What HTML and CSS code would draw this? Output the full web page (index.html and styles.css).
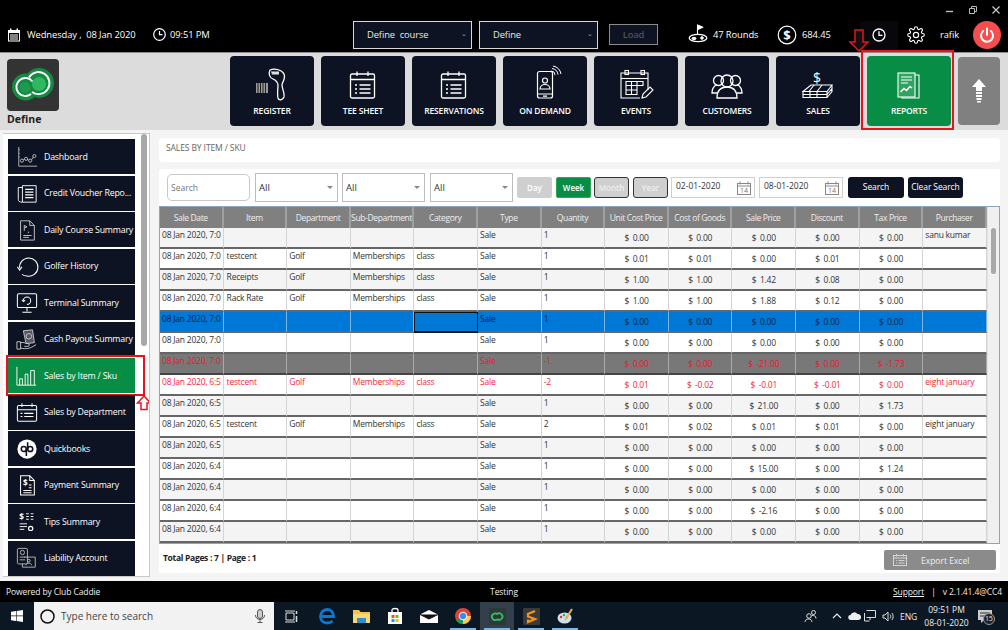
FILE: index.html
```html
<!DOCTYPE html>
<html lang="en">
<head>
<meta charset="utf-8">
<title>Sales by Item / SKU</title>
<link rel="stylesheet" href="styles.css">
</head>
<body>
<div class="app">
<header class="topbar">
  <div class="winctl">
    <svg width="10" height="10" viewBox="0 0 10 10"><path d="M1 6.5h7" stroke="#bbb" stroke-width="1.4"/></svg>
    <svg width="10" height="10" viewBox="0 0 10 10" fill="none" stroke="#bbb"><path d="M1.5 3.5h5v5h-5zM3.5 3.5v-2h5v5h-2"/></svg>
    <svg width="10" height="10" viewBox="0 0 10 10" fill="none" stroke="#ccc" stroke-width="1.2"><path d="M1.5 1.5l7 7M8.500 1.5l-7 7"/></svg>
  </div>
  <div class="toprow">
    <svg class="i-cal" width="14" height="14" viewBox="0 0 14 14"><path fill="#fff" d="M1 2h2V.5h1.500V2h5V.5H11V2h2v11.500H1zM2 5v7.500h10V5z"/><path fill="#fff" d="M3 6.500h8v1H3zM3 8.500h8v1H3zM3 10.500h8v1H3z"/></svg>
    <span class="t-date">Wednesday ,&nbsp; 08 Jan 2020</span>
    <svg class="i-clock" width="13" height="13" viewBox="0 0 13 13" fill="none" stroke="#fff" stroke-width="1.200"><circle cx="6.500" cy="6.500" r="5.800"/><path d="M6.500 3v3.700h3"/></svg>
    <span class="t-time">09:51 PM</span>
    <div class="dd dd-1">Define&nbsp; course<span class="caret">&#8964;</span></div>
    <div class="dd dd-2">Define<span class="caret">&#8964;</span></div>
    <div class="load">Load</div>
    <svg class="i-golf" width="20" height="20" viewBox="0 0 20 20" fill="none" stroke="#fff"><path d="M9.500 11V1l5 2.200-5 2.300" stroke-width="1.100"/><path d="M9.500 1l5 2.200-5 2.300z" fill="#fff"/><ellipse cx="10" cy="14" rx="8.800" ry="3.600" stroke-width="1.300"/><ellipse cx="6" cy="14.500" rx="2" ry="1.200" fill="#fff"/><circle cx="14" cy="14" r="1.300" fill="#fff"/></svg>
    <span class="t-rounds">47 Rounds</span>
    <svg class="i-dollar" width="20" height="20" viewBox="0 0 20 20" fill="none" stroke="#fff" stroke-width="1.200"><circle cx="10" cy="10" r="8.800"/><text x="10" y="14.500" text-anchor="middle" class="dollar-glyph">$</text></svg>
    <span class="t-bal">684.45</span>
    <div class="clockbox"><svg width="14" height="14" viewBox="0 0 14 14" fill="none" stroke="#fff" stroke-width="1.300"><circle cx="7" cy="7" r="6"/><path d="M7 3.200V7.400h3.500"/></svg></div>
    <svg class="i-gear" width="18" height="18" viewBox="0 0 24 24" fill="none" stroke="#fff" stroke-width="1.500"><circle cx="12" cy="12" r="3.500"/><path d="M19.400 15a1.700 1.700 0 0 0 .3 1.800l.1.100a2 2 0 1 1-2.800 2.800l-.1-.1a1.700 1.700 0 0 0-2.900 1.200V21a2 2 0 1 1-4 0v-.1a1.700 1.700 0 0 0-2.900-1.200l-.1.100a2 2 0 1 1-2.800-2.800l.1-.1a1.700 1.700 0 0 0-1.200-2.900H3a2 2 0 1 1 0-4h.1a1.700 1.700 0 0 0 1.200-2.900l-.1-.1a2 2 0 1 1 2.800-2.800l.1.100a1.700 1.700 0 0 0 2.900-1.200V3a2 2 0 1 1 4 0v.1a1.700 1.700 0 0 0 2.900 1.200l.1-.1a2 2 0 1 1 2.800 2.800l-.1.100a1.700 1.700 0 0 0 1.200 2.900h.1a2 2 0 1 1 0 4h-.1a1.700 1.700 0 0 0-1.500 1z"/></svg>
    <span class="t-user">rafik</span>
    <div class="power"><svg width="16" height="16" viewBox="0 0 16 16" fill="none" stroke="#fff" stroke-width="2" stroke-linecap="round"><path d="M8 1.500v6.500"/><path d="M4.200 4a6 6 0 1 0 7.600 0"/></svg></div>
  </div>
</header>

<nav class="navband">
  <div class="brand">
    <div class="logo">
      <svg width="52" height="52" viewBox="0 0 52 52"><circle cx="18.500" cy="28" r="13.500" fill="#148a43"/><circle cx="32" cy="24" r="15" fill="#148a43"/><circle cx="32" cy="25" r="7" fill="#2cb960"/><circle cx="18" cy="28.500" r="5.500" fill="#1d9a4f"/><path d="M25.500 22.500A9 9 0 1 0 24 35M22 18.500A11 11 0 1 1 25 33" fill="none" stroke="#fff" stroke-width="1.900"/></svg>
    </div>
    <div class="brandname">Define</div>
  </div>
  <div class="tiles">
    <a class="tile">
      <svg width="36" height="34" viewBox="0 0 36 34" fill="none" stroke="#fff"><path d="M2 15h12v10H2z" fill="#999" stroke="none"/><path d="M4 15v10M6.500 15v10M9 15v10M11.500 15v10" stroke="#222"/><path d="M16 2c5-2 12 0 14 4 2 5-2 8-2 11 0 4 3 8 2 12-1 3-5 4-6 1-1-4 0-9 0-13 0-2-2-5-5-6-3-1-5-5-3-9z" stroke-width="1.300"/><path d="M17 3.500h8v3h-7z" fill="#ddd" stroke="none"/></svg>
      <span>REGISTER</span>
    </a>
    <a class="tile">
      <svg width="36" height="34" viewBox="0 0 36 34" fill="none" stroke="#fff" stroke-width="1.300"><rect x="5.500" y="6" width="24" height="24" rx="1.500"/><path d="M5.500 11.500h24M12 3.500V8M23 3.500V8"/><path d="M10 17h2M14.500 17h11M10 21h2M14.500 21h11M10 25h2M14.500 25h11"/></svg>
      <span>TEE SHEET</span>
    </a>
    <a class="tile">
      <svg width="36" height="34" viewBox="0 0 36 34" fill="none" stroke="#fff" stroke-width="1.300"><rect x="5.500" y="6" width="24" height="24" rx="1.500"/><path d="M5.500 11.500h24M12 3.500V8M23 3.500V8"/><path d="M10 17h2M14.500 17h11M10 21h2M14.500 21h11M10 25h2M14.500 25h11"/></svg>
      <span>RESERVATIONS</span>
    </a>
    <a class="tile">
      <svg width="36" height="34" viewBox="0 0 36 34" fill="none" stroke="#fff" stroke-width="1.200"><rect x="10.500" y="3.500" width="15" height="26.500" rx="2"/><path d="M10.500 26h15M16 28.200h4"/><circle cx="18" cy="12.500" r="2.500"/><path d="M13 21c0-6 10-6 10 0z"/><path d="M24 3a4 4 0 0 1 4 4M25 .5a7 7 0 0 1 6 6M26 -2a10 10 0 0 1 8 8" stroke-width="1"/></svg>
      <span>ON DEMAND</span>
    </a>
    <a class="tile">
      <svg width="36" height="34" viewBox="0 0 36 34" fill="none" stroke="#fff" stroke-width="1.100"><path d="M22 30H3V5h27v17"/><path d="M3 10.500h27"/><rect x="7" y="2.500" width="3.500" height="4"/><rect x="23" y="2.500" width="3.500" height="4"/><path d="M8 13.500h17v4H8zM8 17.500h11v9H8zM13.500 13.500v13M19 13.500v4M8 22h11"/><path d="M24 30l1-4 7-7 3 3-7 7z"/></svg>
      <span>EVENTS</span>
    </a>
    <a class="tile">
      <svg width="36" height="34" viewBox="0 0 36 34" fill="none" stroke="#fff" stroke-width="1.300"><circle cx="18" cy="13" r="6"/><circle cx="9.500" cy="12.500" r="5"/><circle cx="26.500" cy="12.500" r="5"/><path d="M8 30c0-8 4-11 10-11s10 3 10 11z"/><path d="M8 25H3c0-5 2-7 5-8.500M28 25h5c0-5-2-7-5-8.500"/></svg>
      <span>CUSTOMERS</span>
    </a>
    <a class="tile">
      <svg width="36" height="34" viewBox="0 0 36 34" fill="none" stroke="#fff" stroke-width="1.100"><text x="17" y="15" text-anchor="middle" class="sales-glyph">$</text><path d="M11 17h21l-5 6.500H3z"/><path d="M3 23.500v3h24v-3M3 26.500v3h24v-3M27 26.500l5-6v-3M27 29.500l5-6v-3"/><path d="M14 17l-5 6.500M22 17l-5 6.500M10 23.500v6M17 23.500v6"/></svg>
      <span>SALES</span>
    </a>
    <a class="tile tile-on">
      <svg width="36" height="34" viewBox="0 0 36 34" fill="none" stroke="#fff" stroke-width="1.100"><path d="M24 7h4v23H11v-1"/><rect x="7" y="5" width="17" height="24" fill="#2da45f"/><path d="M10 9h11M10 12h11M10 15h7"/><path d="M9.500 24l3.500-3.500 2.500 2 3.500-4 2 1.500" stroke-width="1.500"/></svg>
      <span>REPORTS</span>
      <i class="redbox redbox-tile"></i>
      <svg class="arrow-down" width="22" height="24" viewBox="0 0 22 24"><path d="M7 1h8v12h5L11 22 2 13h5z" fill="#111" stroke="#e8131f" stroke-width="1.500"/></svg>
    </a>
    <a class="tile-up">
      <svg width="14" height="24" viewBox="0 0 14 24"><path fill="#fff" d="M7 0l7 8h-4v4H4V8H0z"/><path fill="#fff" d="M4 13h6v2H4zM4 16h6v2H4zM4.500 19h5v2h-5zM5 22h4v1.500H5z"/></svg>
    </a>
  </div>
</nav>

<main class="main">
  <aside class="side">
    <div class="sidelist">
      <a class="sitem"><svg width="24" height="24" viewBox="0 0 24 24" fill="none" stroke="#ccc" stroke-width=".9"><path d="M3 1v21h20" /><path d="M3 4h2M3 8h2M3 12h2" stroke-dasharray="1 1"/><circle cx="6.500" cy="16" r="1.700"/><circle cx="11" cy="14" r="1.700"/><circle cx="15.500" cy="16" r="1.700"/><circle cx="20" cy="11" r="1.700"/><path d="M8 15l1.500-.5M12.500 15l1.500.5M17 15l2-3"/></svg><span>Dashboard</span></a>
      <a class="sitem"><svg width="24" height="24" viewBox="0 0 24 24" fill="none" stroke="#fff" stroke-width="1"><path d="M7 4h15v18H7z"/><path d="M7 6H2.500v13c0 2 1 3 4.500 3"/><path d="M10 8h9M10 11h9M10 14h9M10 17h9" stroke-width="1.300"/></svg><span>Credit Voucher Repo...</span></a>
      <a class="sitem"><svg width="24" height="24" viewBox="0 0 24 24" fill="none" stroke="#ccc" stroke-width="1"><path d="M5 2h10l5 5v16H5z"/><path d="M15 2v5h5"/><path d="M9 7v6M9 7l3 1.500L9 10M13 14l1 .5-1 .5M8 18h9M8 20h6"/></svg><span>Daily Course Summary</span></a>
      <a class="sitem"><svg width="24" height="24" viewBox="0 0 24 24" fill="none" stroke="#fff" stroke-width="1.100"><path d="M4 14.500A10 10 0 1 1 12 23c-2.500 0-4-.6-5.500-2"/><path d="M1.500 13l2.500 3.500L6.500 13"/></svg><span>Golfer History</span></a>
      <a class="sitem"><svg width="24" height="24" viewBox="0 0 24 24" fill="none" stroke="#fff" stroke-width="1.100"><rect x="1.500" y="2" width="21" height="15" rx="1.500"/><path d="M12 17v4M7 22h10M8 9.500A4 4 0 1 1 12 13.500"/><path d="M6.500 8.500L8 10.500 10 9"/></svg><span>Terminal Summary</span></a>
      <a class="sitem"><svg width="24" height="24" viewBox="0 0 24 24" fill="none" stroke="#ccc" stroke-width="1"><path d="M8 3l10-1 2 14-9 1z" fill="#556"/><circle cx="14" cy="9" r="3"/><path d="M1 15h4v8H1zM5 16c4-1 5 1 8 1 2 0 2 3 0 3H9M5 22c6 1 10 1 17-4"/></svg><span>Cash Payout Summary</span></a>
      <a class="sitem sitem-on"><svg width="24" height="24" viewBox="0 0 24 24" fill="none" stroke="#fff" stroke-width="1"><path d="M1 2v20h21"/><path d="M4 22v-7h3v7M10 22V10h3v12M16 22V6h4v16"/></svg><span>Sales by Item / Sku</span><i class="redbox redbox-side"></i><svg class="arrow-up" width="16" height="16" viewBox="0 0 16 16"><path d="M8 1l6.500 7H11v6.500H5V8H1.500z" fill="#fff" stroke="#e8131f" stroke-width="1.500"/></svg></a>
      <a class="sitem"><svg width="24" height="24" viewBox="0 0 24 24" fill="none" stroke="#fff" stroke-width="1.100"><rect x="1.500" y="5" width="21" height="17" rx="1.500"/><path d="M1.500 9.500h21M6.500 2.500V6.500M17.500 2.500V6.500"/><path d="M5 13.500h2M9 13.500h10M5 17h2M9 17h10"/></svg><span>Sales by Department</span></a>
      <a class="sitem"><svg width="24" height="24" viewBox="0 0 24 24"><circle cx="12" cy="12" r="10.500" fill="#fff"/><g fill="none" stroke="#0d1322" stroke-width="1.700"><circle cx="8.500" cy="12" r="2.800"/><circle cx="15.500" cy="12" r="2.800"/><path d="M11.300 12v7.500M12.700 4.500V12"/></g></svg><span>Quickbooks</span></a>
      <a class="sitem"><svg width="24" height="24" viewBox="0 0 24 24" fill="none" stroke="#fff" stroke-width="1.100"><path d="M5 2h10l5 5v16H5z"/><path d="M15 2v5h5"/><text x="10" y="13" text-anchor="middle" class="doc-glyph">$</text><path d="M14 12h3M14 15h3M8 18h9M8 20.500h9"/></svg><span>Payment Summary</span></a>
      <a class="sitem"><svg width="24" height="24" viewBox="0 0 24 24" fill="none" stroke="#fff" stroke-width="1"><text x="6" y="10" text-anchor="middle" class="tip-glyph">$</text><path d="M11 3h3M16 3h3M11 6h3M16 6h3M11 9h3M16 9h3M4 14h8M4 17h8M4 20h5"/><circle cx="16" cy="19" r="2.300" stroke-width="1.300"/></svg><span>Tips Summary</span></a>
      <a class="sitem"><svg width="24" height="24" viewBox="0 0 24 24" fill="none" stroke="#bbb" stroke-width="1"><rect x="1.500" y="1.500" width="11" height="17" rx="1.500"/><circle cx="7" cy="6" r="2.300"/><path d="M4 11h6M4 14h6"/><path d="M9 11h12v11H7v-4"/><circle cx="14" cy="15" r="1.500"/><path d="M11 20c0-3 6-3 6 0"/></svg><span>Liability Account</span></a>
      <a class="sitem"></a>
    </div>
    <div class="sidebar-thumb"></div>
  </aside>

  <section class="content">
    <div class="crumb">SALES BY ITEM / SKU</div>
    <div class="panel">
      <div class="filters">
        <div class="f-search">Search</div>
        <div class="f-sel">All<b class="tri"></b></div>
        <div class="f-sel">All<b class="tri"></b></div>
        <div class="f-sel">All<b class="tri"></b></div>
        <div class="pill pill-off">Day</div>
        <div class="pill pill-on">Week</div>
        <div class="pill pill-ring">Month</div>
        <div class="pill pill-ring pill-last">Year</div>
        <div class="f-date">02-01-2020<svg width="14" height="14" viewBox="0 0 14 14" fill="none" stroke="#888"><rect x=".5" y="2.500" width="13" height="11"/><path d="M.5 5h13M3 .5v3M11 .5v3"/><text x="7" y="12.300" text-anchor="middle" class="cal-glyph">14</text></svg></div>
        <div class="f-date">08-01-2020<svg width="14" height="14" viewBox="0 0 14 14" fill="none" stroke="#888"><rect x=".5" y="2.500" width="13" height="11"/><path d="M.5 5h13M3 .5v3M11 .5v3"/><text x="7" y="12.300" text-anchor="middle" class="cal-glyph">14</text></svg></div>
        <div class="btn-dark btn-search">Search</div>
        <div class="btn-dark btn-clear">Clear Search</div>
      </div>

      <div class="gridwrap">
        <table class="grid">
          <thead>
            <tr><th>Sale Date</th><th>Item</th><th>Department</th><th>Sub-Department</th><th>Category</th><th>Type</th><th>Quantity</th><th>Unit Cost Price</th><th>Cost of Goods</th><th>Sale Price</th><th>Discount</th><th>Tax Price</th><th>Purchaser</th></tr>
          </thead>
          <tbody>
            <tr class="alt"><td>08 Jan 2020, 7:0</td><td></td><td></td><td></td><td></td><td>Sale</td><td>1</td><td class="m">$ 0.00</td><td class="m">$ 0.00</td><td class="m">$ 0.00</td><td class="m">$ 0.00</td><td class="m">$ 0.00</td><td>sanu kumar</td></tr>
            <tr><td>08 Jan 2020, 7:0</td><td>testcent</td><td>Golf</td><td>Memberships</td><td>class</td><td>Sale</td><td>1</td><td class="m">$ 0.01</td><td class="m">$ 0.01</td><td class="m">$ 0.00</td><td class="m">$ 0.01</td><td class="m">$ 0.00</td><td></td></tr>
            <tr class="alt"><td>08 Jan 2020, 7:0</td><td>Receipts</td><td>Golf</td><td>Memberships</td><td>class</td><td>Sale</td><td>1</td><td class="m">$ 1.00</td><td class="m">$ 1.00</td><td class="m">$ 1.42</td><td class="m">$ 0.08</td><td class="m">$ 0.00</td><td></td></tr>
            <tr><td>08 Jan 2020, 7:0</td><td>Rack Rate</td><td>Golf</td><td>Memberships</td><td>class</td><td>Sale</td><td>1</td><td class="m">$ 1.00</td><td class="m">$ 1.00</td><td class="m">$ 1.88</td><td class="m">$ 0.12</td><td class="m">$ 0.00</td><td></td></tr>
            <tr class="sel"><td>08 Jan 2020, 7:0</td><td></td><td></td><td></td><td class="focus"></td><td>Sale</td><td>1</td><td class="m">$ 0.00</td><td class="m">$ 0.00</td><td class="m">$ 0.00</td><td class="m">$ 0.00</td><td class="m">$ 0.00</td><td></td></tr>
            <tr><td>08 Jan 2020, 7:0</td><td></td><td></td><td></td><td></td><td>Sale</td><td>1</td><td class="m">$ 0.00</td><td class="m">$ 0.00</td><td class="m">$ 0.00</td><td class="m">$ 0.00</td><td class="m">$ 0.00</td><td></td></tr>
            <tr class="void"><td>08 Jan 2020, 7:0</td><td></td><td></td><td></td><td></td><td>Sale</td><td>-1</td><td class="m">$ 0.00</td><td class="m">$ 0.00</td><td class="m">$ -21.00</td><td class="m">$ 0.00</td><td class="m">$ -1.73</td><td></td></tr>
            <tr class="neg"><td>08 Jan 2020, 6:5</td><td>testcent</td><td>Golf</td><td>Memberships</td><td>class</td><td>Sale</td><td>-2</td><td class="m">$ 0.01</td><td class="m">$ -0.02</td><td class="m">$ -0.01</td><td class="m">$ -0.01</td><td class="m">$ 0.00</td><td>eight january</td></tr>
            <tr class="alt"><td>08 Jan 2020, 6:5</td><td></td><td></td><td></td><td></td><td>Sale</td><td>1</td><td class="m">$ 0.00</td><td class="m">$ 0.00</td><td class="m">$ 21.00</td><td class="m">$ 0.00</td><td class="m">$ 1.73</td><td></td></tr>
            <tr><td>08 Jan 2020, 6:5</td><td>testcent</td><td>Golf</td><td>Memberships</td><td>class</td><td>Sale</td><td>2</td><td class="m">$ 0.01</td><td class="m">$ 0.02</td><td class="m">$ 0.01</td><td class="m">$ 0.01</td><td class="m">$ 0.00</td><td>eight january</td></tr>
            <tr class="alt"><td>08 Jan 2020, 6:5</td><td></td><td></td><td></td><td></td><td>Sale</td><td>1</td><td class="m">$ 0.00</td><td class="m">$ 0.00</td><td class="m">$ 0.00</td><td class="m">$ 0.00</td><td class="m">$ 0.00</td><td></td></tr>
            <tr><td>08 Jan 2020, 6:4</td><td></td><td></td><td></td><td></td><td>Sale</td><td>1</td><td class="m">$ 0.00</td><td class="m">$ 0.00</td><td class="m">$ 15.00</td><td class="m">$ 0.00</td><td class="m">$ 1.24</td><td></td></tr>
            <tr class="alt"><td>08 Jan 2020, 6:4</td><td></td><td></td><td></td><td></td><td>Sale</td><td>1</td><td class="m">$ 0.00</td><td class="m">$ 0.00</td><td class="m">$ 0.00</td><td class="m">$ 0.00</td><td class="m">$ 0.00</td><td></td></tr>
            <tr><td>08 Jan 2020, 6:4</td><td></td><td></td><td></td><td></td><td>Sale</td><td>1</td><td class="m">$ 0.00</td><td class="m">$ 0.00</td><td class="m">$ -2.16</td><td class="m">$ 0.00</td><td class="m">$ 0.00</td><td></td></tr>
            <tr class="alt"><td>08 Jan 2020, 6:4</td><td></td><td></td><td></td><td></td><td>Sale</td><td>1</td><td class="m">$ 0.00</td><td class="m">$ 0.00</td><td class="m">$ 0.00</td><td class="m">$ 0.00</td><td class="m">$ 0.00</td><td></td></tr>
          </tbody>
        </table>
        <div class="gridscroll"><div class="gridthumb"></div></div>
      </div>

      <div class="panelfoot">
        <div class="totals">Total Pages : 7 | Page : 1</div>
        <div class="export"><svg width="14" height="12" viewBox="0 0 14 12" fill="none" stroke="#ddd" stroke-width=".9"><rect x=".5" y="1.500" width="13" height="10"/><path d="M.5 4h13M3.500 0v2.500M10.500 0v2.500M3 6.500h1M5.500 6.500h6M3 9h1M5.500 9h6"/></svg><span>Export Excel</span></div>
      </div>
    </div>
  </section>
</main>

<footer class="foot">
  <span class="foot-l">Powered by Club Caddie</span>
  <span class="foot-c">Testing</span>
  <span class="foot-r"><u>Support</u><em>|</em>v 2.1.41.4@CC4</span>
</footer>

<div class="taskbar">
  <div class="startbtn"><svg width="12" height="12" viewBox="0 0 12 12" fill="#fff"><path d="M0 1.700L5 1v4.600H0zM5.600 .9L12 0v5.600H5.600zM0 6.200h5v4.700l-5-.7zM5.600 6.200H12V12l-6.400-.9z"/></svg></div>
  <div class="tsearch">
    <svg width="15" height="15" viewBox="0 0 15 15" fill="none" stroke="#111" stroke-width="1.500"><circle cx="7.500" cy="7.500" r="6.500"/></svg>
    <span>Type here to search</span>
    <svg class="mic" width="10" height="14" viewBox="0 0 10 14" fill="none" stroke="#555"><rect x="2.500" y=".5" width="5" height="9" rx="2.500" fill="#ccc"/><path d="M.5 6c0 6 9 6 9 0M5 11v2.500M2.500 13.500h5"/></svg>
  </div>
  <div class="tview"><svg width="13" height="13" viewBox="0 0 13 13" fill="none" stroke="#ddd"><path d="M1 3h8v7H1zM0 1h10M0 12h10" /><path d="M11.500 1v3M11.500 6v6" stroke-width="1.500"/></svg></div>
  <div class="tapps">
    <div class="tapp"><svg width="16" height="16" viewBox="0 0 16 16" fill="none" stroke="#0b78d6" stroke-width="2.800"><path d="M3 8.500h11.500C14.500 4 11.500 1.500 8 1.500 4 1.500 1.500 5 1.500 8.500c0 4 3 6.500 6.500 6.500 2.500 0 4.500-1 5.500-2"/></svg></div>
    <div class="tapp"><svg width="17" height="14" viewBox="0 0 17 14"><path d="M0 1h6l1.500 2H17v11H0z" fill="#f2c14e"/><path d="M0 5h17v9H0z" fill="#f8d775"/><path d="M4 9h9v5H4z" fill="#2a8fd8"/></svg></div>
    <div class="tapp"><svg width="16" height="16" viewBox="0 0 16 16"><path d="M1 4h14v12H1z" fill="#fff"/><path d="M5 5V2c0-2 6-2 6 0v3" fill="none" stroke="#fff" stroke-width="1.300"/><path d="M4.500 7h3v3h-3z" fill="#f25022"/><path d="M8.500 7h3v3h-3z" fill="#7fba00"/><path d="M4.500 11h3v3h-3z" fill="#00a4ef"/><path d="M8.500 11h3v3h-3z" fill="#ffb900"/></svg></div>
    <div class="tapp"><svg width="18" height="13" viewBox="0 0 18 13"><path d="M0 4.500L9 0l9 4.500V13H0z" fill="#fff"/><path d="M0 4.500L9 9l9-4.500" fill="#111" stroke="#111"/></svg></div>
    <div class="tapp"><svg width="16" height="16" viewBox="0 0 16 16"><circle cx="8" cy="8" r="8" fill="#db4437"/><path d="M8 8L1 12a8 8 0 0 0 7 4l4-8z" fill="#0f9d58"/><path d="M8 8h8a8 8 0 0 1-8 8l-0-2z" fill="#ffcd40"/><circle cx="8" cy="8" r="3.800" fill="#4285f4" stroke="#fff"/></svg></div>
    <div class="tapp tapp-on"><svg width="17" height="17" viewBox="0 0 17 17"><rect width="17" height="17" fill="#2b3a35"/><path d="M8 11.500a3.300 3.300 0 1 1 0-5.500 3.300 3.300 0 1 1 0 5" fill="none" stroke="#31c26c" stroke-width="1.700"/></svg></div>
    <div class="tapp"><svg width="17" height="17" viewBox="0 0 17 17"><rect width="17" height="17" rx="1" fill="#3a3a3a"/><path d="M12 3L5 6v2.500l7 2.500-7 3v-2.500" fill="none" stroke="#f7941d" stroke-width="2.200"/></svg></div>
    <div class="tapp"><svg width="17" height="17" viewBox="0 0 17 17"><ellipse cx="7.500" cy="10" rx="7" ry="5.500" fill="#cfe0ee"/><circle cx="4" cy="9" r="1.200" fill="#d33"/><circle cx="7" cy="7" r="1.200" fill="#3a3"/><circle cx="10" cy="9" r="1.200" fill="#36c"/><path d="M8 12L15 1" stroke="#e9b44c" stroke-width="2"/></svg></div>
  </div>
  <div class="ttray">
    <svg class="tr-people" width="14" height="14" viewBox="0 0 14 14" fill="none" stroke="#ddd"><circle cx="5" cy="7" r="2.300"/><path d="M1 13c0-4 7-4 7 0"/><circle cx="9.500" cy="3.500" r="2"/><path d="M8 6.500c2-.5 4 .5 4 3"/></svg>
    <svg class="tr-caret" width="10" height="6" viewBox="0 0 10 6" fill="none" stroke="#eee" stroke-width="1.100"><path d="M1 5l4-4 4 4"/></svg>
    <svg class="tr-cloud" width="13" height="8" viewBox="0 0 13 8" fill="#eee"><path d="M3 8a2.500 2.500 0 0 1-.5-5A4 4 0 0 1 9.500 2 3 3 0 0 1 10.500 8z"/></svg>
    <svg class="tr-net" width="12" height="12" viewBox="0 0 12 12" fill="none" stroke="#ddd"><path d="M2.500 .5h9v7h-9M.5 3v8M.5 11h5M6 7.500V10"/></svg>
    <svg class="tr-vol" width="12" height="11" viewBox="0 0 12 11" fill="none" stroke="#ddd"><path d="M1 4v3h2l3 3V1L3 4z"/><path d="M8 3.500c1 1 1 3 0 4M10 2c1.500 2 1.500 5 0 7"/></svg>
    <span class="tr-eng">ENG</span>
    <div class="tr-clock"><div>09:51 PM</div><div>08-01-2020</div></div>
    <div class="tr-note"><svg width="14" height="13" viewBox="0 0 14 13" fill="#ccc"><path d="M0 0h14v10H6l-3 3v-3H0z"/><path d="M2 3h10M2 6h10" stroke="#333"/></svg><b>15</b></div>
  </div>
</div>
</div>
</body>
</html>
```

FILE: styles.css
```css
* { box-sizing: border-box; }
html, body { margin: 0; padding: 0; }
body { font-family: "Open Sans", "Noto Sans", "Liberation Sans", sans-serif; color: #222; background: #000; }
svg { display: block; flex: none; overflow: visible; }
.app { width: 1008px; height: 630px; display: flex; flex-direction: column; overflow: hidden; }

/* top bar */
.topbar { height: 53px; background: #000; border-bottom: 1px solid #8c8c8c; color: #fff; font-size: 9.400px; }
.winctl { height: 21px; display: flex; justify-content: flex-end; align-items: center; gap: 13px; padding: 0 7px 2px 0; }
.toprow { height: 31px; display: flex; align-items: flex-start; letter-spacing: -.1px; }
.toprow > span { line-height: 14px; margin-top: 7px; white-space: nowrap; }
.i-cal { margin: 7px 0 0 7px; }
.t-date { margin-left: 6px; width: 126px; }
.i-clock { margin: 7px 0 0 0; }
.t-time { margin-left: 4px; width: 183px; }
.dd { width: 119px; height: 28px; margin-right: 7px; background: #0d1322; border: 1px solid #d8d8d8; color: #e8e8e8; line-height: 26px; padding-left: 13px; position: relative; }
.caret { position: absolute; right: 4px; top: -1px; font-size: 7px; color: #aaa; }
.load { width: 49px; height: 21px; margin: 3px 30px 0 4px; background: #0d1322; border: 1px solid #8b8b8b; color: #4d5160; text-align: center; line-height: 19px; font-weight: 600; }
.i-golf { margin-top: 3px; }
.t-rounds { margin-left: 5px; width: 64px; }
.i-dollar { margin-top: 4px; }
.dollar-glyph { font: 700 13px "Open Sans", sans-serif; fill: #fff; stroke: none; }
.t-bal { margin-left: 5px; width: 30px; }
.clockbox { width: 38px; height: 31px; margin-left: 28px; background: #07070c; display: flex; justify-content: center; padding-top: 7px; }
.i-gear { margin: 5px 0 0 9px; }
.t-user { margin-left: 15px; width: 33px; }
.power { width: 28px; height: 28px; border-radius: 50%; background: #f44e4e; display: flex; align-items: center; justify-content: center; }

/* navigation band */
.navband { height: 77px; background: #dcdcdc; display: flex; padding: 3px 8px 0 7px; }
.brand { width: 52px; padding-top: 3px; }
.logo { width: 52px; height: 52px; background: #333; border-radius: 4px; }
.brandname { font-size: 10.500px; font-weight: 700; color: #222; line-height: 14px; margin-top: 1px; }
.tiles { margin-left: auto; display: flex; gap: 7px; height: 70px; }
.tile { width: 84px; height: 70px; background: #0d1322; border-radius: 4px; color: #fff; display: flex; flex-direction: column; align-items: center; padding-top: 12px; font-size: 8.500px; font-weight: 600; position: relative; letter-spacing: -.15px; }
.tile span { margin-top: 2px; line-height: 14px; }
.tile-on { background: #078d45; }
.tile-up { width: 42px; height: 68px; margin-top: 1px; background: #808080; border-radius: 4px; display: flex; align-items: center; justify-content: center; }
.redbox { position: absolute; border: 2px solid #e8131f; pointer-events: none; }
.redbox-tile { left: -6px; right: -3px; top: -6px; bottom: -4px; }
.arrow-down { position: absolute; left: -19px; top: -27px; }

/* main */
.main { height: 451px; background: #f4f4f4; display: flex; align-items: flex-start; }
.side { width: 147px; height: 444px; margin: 3px 0 0 3px; background: #fff; border: 1px solid #c9c9c9; border-width: 1px 1px 1px 0; padding: 5px 0 0 5px; overflow: hidden; position: relative; flex: none; }
.sidelist { width: 127px; display: flex; flex-direction: column; gap: 1.500px; }
.sitem { height: 35px; background: #0d1322; color: #fff; display: flex; align-items: center; gap: 6px; padding-left: 8px; font-size: 8.800px; letter-spacing: -.2px; white-space: nowrap; position: relative; flex: none; }
.sitem svg { width: 22px; height: 22px; }
.sitem-on { background: #078d45; }
.redbox-side { left: -2px; right: -10px; top: -3px; bottom: -3px; }
.sitem .arrow-up { position: absolute; left: 128px; top: 37px; width: 16px; height: 16px; }
.sidebar-thumb { position: absolute; left: 138px; top: 0; width: 6px; height: 212px; background: #a8a8a8; border-radius: 3px; }
.doc-glyph, .tip-glyph, .sales-glyph { fill: #fff; stroke: none; font-family: "Open Sans", sans-serif; font-weight: 700; }
.doc-glyph, .tip-glyph { font-size: 9px; }
.sales-glyph { font-size: 14px; font-weight: 400; }

.content { width: 841px; margin: 8px 0 0 9px; flex: none; display: flex; flex-direction: column; gap: 7px; }
.crumb { height: 24px; background: #fff; border-radius: 4px; padding-left: 7px; font-size: 8.500px; color: #666; line-height: 20px; letter-spacing: -.1px; }
.panel { height: 404px; background: #fff; border-radius: 2px; display: flex; flex-direction: column; }

.filters { height: 37px; display: flex; align-items: flex-start; padding: 4px 0 0 8px; font-size: 9px; }
.f-search { width: 83px; height: 27px; border: 1px solid #c9c9c9; border-radius: 5px; padding-left: 3px; line-height: 25px; color: #777; font-size: 8.500px; margin-top: 1px; margin-right: 5px; }
.f-sel { width: 83px; height: 29px; border: 1px solid #bdbdbd; padding-left: 3px; line-height: 27px; margin-right: 4px; position: relative; font-size: 9.500px; color: #333; }
.f-sel + .f-sel + .f-sel { margin-left: 1px; }
.tri { position: absolute; right: 4px; top: 12px; width: 0; height: 0; border: 3px solid transparent; border-top: 3.500px solid #888; border-bottom: 0; }
.pill { width: 35px; height: 21px; margin: 4px 4px 0 0; text-align: center; line-height: 19px; font-size: 8px; color: #fff; background: #cfcfcf; border: 1px solid #cfcfcf; border-radius: 2px; font-weight: 600; }
.pill-on { background: #078d45; border-color: #2fa64f; margin-right: 3px; }
.pill-ring { border-color: #333; border-radius: 3px; color: #eee; }
.pill-last { margin-right: 3px; }
.f-date { width: 84px; height: 21px; margin: 4px 4px 0 0; border: 1px solid #d0d0d0; display: flex; justify-content: space-between; padding: 0 3px 0 4px; line-height: 16px; font-size: 8.500px; color: #333; align-items: flex-start; }
.f-date svg { margin-top: 3px; }
.cal-glyph { font: 7px "Open Sans", sans-serif; fill: #777; stroke: none; }
.btn-dark { height: 21px; margin-top: 4px; background: #0d1322; color: #fff; border-radius: 3px; text-align: center; line-height: 20px; font-size: 8.500px; letter-spacing: -.1px; }
.btn-search { width: 56px; margin-left: 1px; margin-right: 4px; }
.btn-clear { width: 55px; }

.gridwrap { height: 338px; display: flex; border: 1px solid #8aa5c6; overflow: hidden; }
.grid { width: 827px; border-collapse: separate; border-spacing: 0; table-layout: fixed; font-size: 8.500px; letter-spacing: -.22px; flex: none; }
.grid th { height: 21px; background: #808080; color: #eee; font-weight: 400; border-right: 2px solid #a0a0a0; padding: 0; white-space: nowrap; overflow: hidden; letter-spacing: -.36px; }
.grid td { height: 21px; padding: 0 0 0 2px; vertical-align: top; line-height: 14px; border-right: 1px solid #d4d4d4; border-bottom: 2px solid #666; background: #fff; white-space: nowrap; overflow: hidden; color: #333; }
.grid td.m { vertical-align: middle; text-align: center; padding: 1px 0 0; line-height: 14px; word-spacing: 1.500px; }
.grid td:nth-child(2) { padding-left: 3px; }
.grid .alt td { background: #f4f4f4; }
.grid .sel td { background: #0078d7; color: #0b2340; border-right-color: #7fb5e6; }
.grid .sel td.focus { border: 1px solid #111; border-bottom: 2px solid #111; }
.grid .void td { background: #787878; color: #e8192c; border-right-color: #aaa; border-bottom-color: #444; }
.grid .neg td { color: #f5283c; }
.gridscroll { flex: 1; background: #f0f0f0; border-left: 1px solid #e2e2e2; }
.gridthumb { width: 5px; height: 46px; margin: 21px 0 0 3px; background: #a9a9a9; border-radius: 3px; }

.panelfoot { flex: 1; display: flex; justify-content: space-between; align-items: center; padding: 3px 4px 0 4px; }
.totals { font-size: 8.500px; font-weight: 700; color: #222; margin-bottom: 5px; letter-spacing: -.3px; }
.export { width: 112px; height: 20px; background: #8b8b8b; border-radius: 2px; color: #eee; display: flex; align-items: center; padding-left: 9px; font-size: 8.500px; gap: 14px; }

/* footer */
.foot { height: 21px; background: #000; color: #eee; font-size: 8.500px; display: grid; grid-template-columns: 1fr 1fr 1fr; align-items: center; padding: 0 6px; letter-spacing: -.1px; }
.foot-c { text-align: center; }
.foot-r { text-align: right; }
.foot-r em { font-style: normal; margin: 0 7px; }

/* windows taskbar */
.taskbar { height: 28px; background: #0b1722; display: flex; align-items: center; color: #eee; }
.startbtn { width: 34px; padding-left: 11px; }
.tsearch { width: 240px; height: 28px; background: #f2f2f2; display: flex; align-items: center; padding: 0 9px 0 6px; gap: 6px; color: #444; font-size: 10px; }
.mic { margin-left: auto; }
.tview { width: 34px; display: flex; justify-content: center; }
.tapps { display: flex; margin-left: 2px; }
.tapp { width: 34px; height: 28px; display: flex; align-items: center; justify-content: center; position: relative; }
.tapp:nth-child(n+5)::after { content: ""; position: absolute; left: 4px; right: 4px; bottom: 0; height: 2px; background: #76b9ed; }
.tapp-on { background: #33404b; }
.ttray { margin-left: auto; display: flex; align-items: center; font-size: 8.500px; padding-right: 16px; }
.tr-caret { margin-left: 14px; }
.tr-cloud { margin-left: 6px; }
.tr-net { margin-left: 3px; }
.tr-vol { margin-left: 6px; }
.tr-eng { margin-left: 6px; width: 17px; }
.tr-clock { width: 57px; margin-left: 1px; text-align: center; line-height: 13px; }
.tr-note { margin-left: 3px; position: relative; }
.tr-note b { position: absolute; left: 5px; top: 3px; width: 12px; height: 12px; border-radius: 50%; background: #222; border: 1px solid #999; font-size: 6.500px; font-weight: 400; line-height: 10px; text-align: center; }
```
